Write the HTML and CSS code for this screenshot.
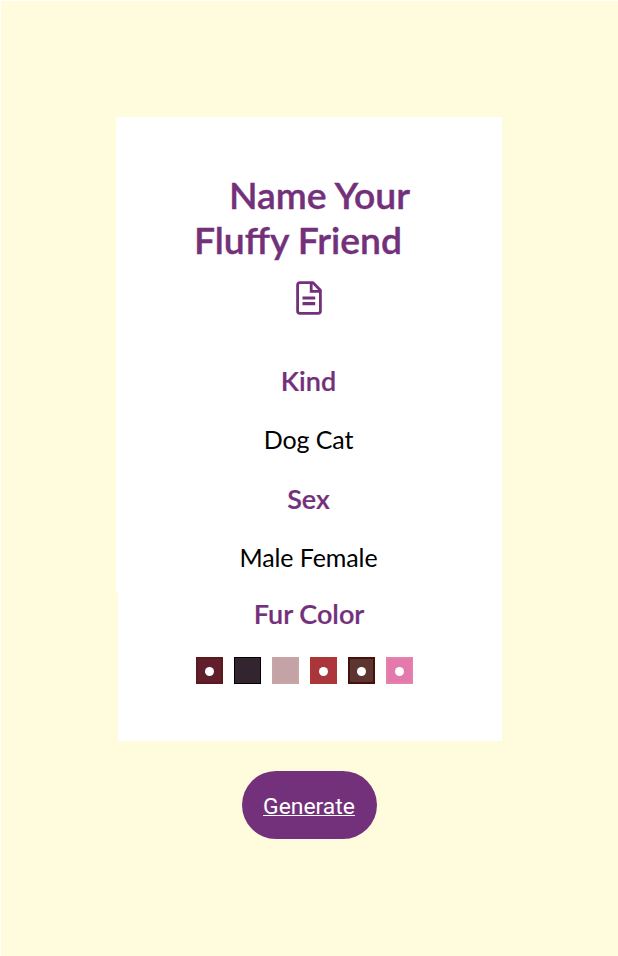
FILE: index.html
```html
<!DOCTYPE html>
<html lang="en">
<head>
<meta charset="utf-8">
<title>Name Your Fluffy Friend</title>
<link rel="stylesheet" href="styles.css">
</head>
<body>
<main class="page">
  <div class="card">
    <section class="card-main">
      <h1 class="title"><span class="title-first">Name Your</span><span class="title-second">Fluffy Friend</span></h1>
      <svg class="doc-icon" width="26" height="34" viewBox="0 0 26 34" fill="none" stroke="currentColor" stroke-width="2.8">
        <path d="M16.8 1.6H4Q1.6 1.6 1.6 4V30Q1.6 32.4 4 32.4H22Q24.4 32.4 24.4 30V9.2Z" stroke-linejoin="round"/>
        <path d="M15.2 2V10.3H24"/>
        <path d="M6.5 17H19.2M6.5 22.6H19.2" stroke-width="3.2"/>
      </svg>
      <h2 class="label kind">Kind</h2>
      <p class="options dogcat">Dog Cat</p>
      <h2 class="label sex">Sex</h2>
      <p class="options gender">Male Female</p>
    </section>
    <section class="card-color">
      <h2 class="label fur">Fur Color</h2>
      <div class="swatches">
        <span class="swatch wine"><i class="dot"></i></span>
        <span class="swatch black"></span>
        <span class="swatch rose"></span>
        <span class="swatch red"><i class="dot"></i></span>
        <span class="swatch brown"><i class="dot"></i></span>
        <span class="swatch pink"><i class="dot"></i></span>
      </div>
    </section>
  </div>
  <a class="generate" href="#"><span>Generate</span></a>
</main>
</body>
</html>
```
FILE: styles.css
```css
* { box-sizing: border-box; }
body { margin: 0; background: #fff; font-family: Lato, "Liberation Sans", sans-serif; }
.page { height: 956px; padding-top: 116px; border-top: 1px solid #fff; border-left: 1px solid #fff; background: #fffbdd; display: flex; flex-direction: column; align-items: center; }
.card { width: 386px; height: 624px; margin-right: 1px; display: flex; flex-direction: column; }
.card-main { height: 476px; padding-top: 56px; background: #fff; display: flex; flex-direction: column; align-items: center; }
.card-color { flex: 1; margin-left: 2px; background: #fff; display: flex; flex-direction: column; align-items: center; }
h1, h2, p { margin: 0; white-space: nowrap; }
.title { width: 230px; font-size: 37.3px; line-height: 44.5px; font-weight: 600; color: #73307b; -webkit-text-stroke: 0.4px #73307b; }
.title span { display: block; }
.title-first { padding-left: 35px; }
.doc-icon { color: #73307b; margin-top: 19px; }
.label { font-size: 27px; line-height: 36px; font-weight: 600; color: #73307b; -webkit-text-stroke: 0.2px #73307b; }
.options { font-size: 25px; line-height: 36px; color: #000; letter-spacing: -0.1px; }
.kind { margin-top: 48px; margin-right: 1px; }
.dogcat { margin-top: 22px; margin-right: 1px; }
.sex { margin-top: 24px; margin-right: 1px; }
.gender { margin-top: 22px; margin-right: 1px; }
.fur { margin-top: 3px; margin-right: 2px; }
.swatches { display: flex; width: 217px; margin-top: 25px; justify-content: space-between; margin-right: 11px; }
.swatch { width: 27px; height: 27px; border: 2px solid; display: grid; place-items: center; }
.wine { background: #611e2c; border-color: #5a1a1c; }
.black { background: #33252f; border-color: #000; border-width: 1px; }
.rose { background: #c4a3a6; border-color: #c8a4a5; }
.red { background: #aa363c; border-color: #ad3735; }
.brown { background: #5d3530; border-color: #451009; }
.pink { background: #e479ab; border-color: #e681ac; }
.dot { width: 9px; height: 9px; margin-top: 1px; border-radius: 50%; background: #fff; }
.generate { width: 135px; height: 68px; margin-top: 30px; margin-right: 1px; padding-top: 3px; border-radius: 34px; background: #73307b; color: #fff; display: flex; align-items: center; justify-content: center; font: 400 22.9px/30px Roboto, sans-serif; text-decoration: underline; text-decoration-thickness: 1px; text-underline-offset: 1px; }
```
